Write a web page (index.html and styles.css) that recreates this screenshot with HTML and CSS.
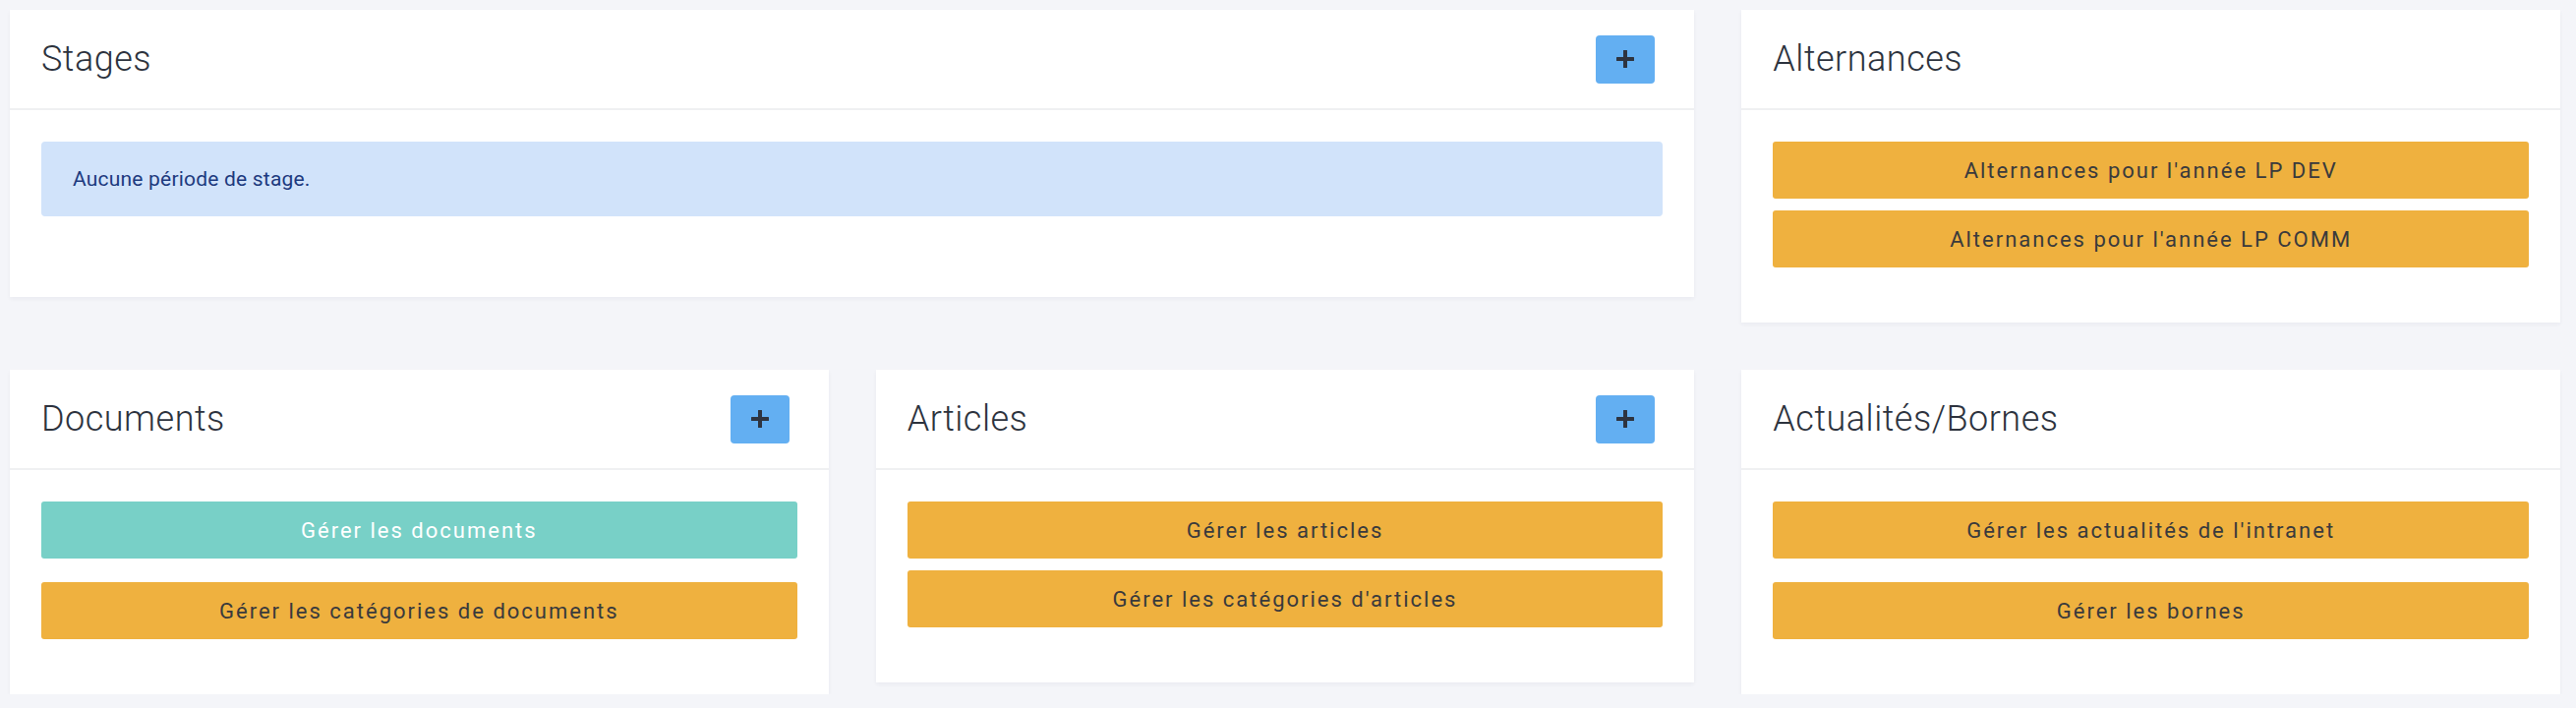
FILE: index.html
```html
<!DOCTYPE html>
<html lang="fr">
<head>
<meta charset="utf-8">
<title>Tableau de bord</title>
<link rel="stylesheet" href="styles.css">
</head>
<body>
<main class="grid">
  <section class="card card-wide">
    <header class="card-header">
      <h2 class="card-title">Stages</h2>
      <button class="btn-add" type="button" aria-label="Ajouter">
        <svg width="18" height="18" viewBox="0 0 18 18"><path d="M9 1v16M1 9h16" stroke="#2e3440" stroke-width="4" stroke-linecap="round"/></svg>
      </button>
    </header>
    <div class="card-body">
      <div class="alert">Aucune période de stage.</div>
    </div>
  </section>

  <section class="card">
    <header class="card-header">
      <h2 class="card-title">Alternances</h2>
    </header>
    <div class="card-body tight">
      <a class="btn btn-orange">Alternances pour l'année LP DEV</a>
      <a class="btn btn-orange">Alternances pour l'année LP COMM</a>
    </div>
  </section>

  <section class="card">
    <header class="card-header">
      <h2 class="card-title">Documents</h2>
      <button class="btn-add" type="button" aria-label="Ajouter">
        <svg width="18" height="18" viewBox="0 0 18 18"><path d="M9 1v16M1 9h16" stroke="#2e3440" stroke-width="4" stroke-linecap="round"/></svg>
      </button>
    </header>
    <div class="card-body loose">
      <a class="btn btn-teal">Gérer les documents</a>
      <a class="btn btn-orange">Gérer les catégories de documents</a>
    </div>
  </section>

  <section class="card">
    <header class="card-header">
      <h2 class="card-title">Articles</h2>
      <button class="btn-add" type="button" aria-label="Ajouter">
        <svg width="18" height="18" viewBox="0 0 18 18"><path d="M9 1v16M1 9h16" stroke="#2e3440" stroke-width="4" stroke-linecap="round"/></svg>
      </button>
    </header>
    <div class="card-body tight">
      <a class="btn btn-orange">Gérer les articles</a>
      <a class="btn btn-orange">Gérer les catégories d'articles</a>
    </div>
  </section>

  <section class="card">
    <header class="card-header">
      <h2 class="card-title">Actualités/Bornes</h2>
    </header>
    <div class="card-body loose">
      <a class="btn btn-orange">Gérer les actualités de l'intranet</a>
      <a class="btn btn-orange">Gérer les bornes</a>
    </div>
  </section>
</main>
</body>
</html>
```

FILE: styles.css
```css
* { box-sizing: border-box; }

html, body {
  margin: 0;
  background: #f4f5f9;
}

body {
  padding: 10px 16px 0 10px;
  font-family: Roboto, "Liberation Sans", Arial, sans-serif;
  color: #2e3440;
}

.grid {
  display: grid;
  grid-template-columns: repeat(3, 1fr);
  column-gap: 48px;
  row-gap: 48px;
  align-items: start;
}

.card {
  background: #ffffff;
  box-shadow: 0 2px 4px rgba(30, 40, 70, 0.05);
}

.card-wide {
  grid-column: span 2;
}

.card-header {
  height: 102px;
  display: flex;
  align-items: center;
  justify-content: space-between;
  padding: 0 40px 0 32px;
  border-bottom: 2px solid #eff0f2;
}

.card-title {
  margin: 0;
  font-size: 36px;
  font-weight: 300;
  color: #2d333e;
  letter-spacing: 0.5px;
}

.btn-add {
  width: 60px;
  height: 49px;
  border: 0;
  border-radius: 4px;
  background: #63aff2;
  display: flex;
  align-items: center;
  justify-content: center;
  padding: 0;
}

.card-body {
  display: flex;
  flex-direction: column;
  padding: 32px 32px 56px;
}

.card-body.tight { gap: 12px; }
.card-body.loose { gap: 24px; }

.alert {
  height: 76px;
  display: flex;
  align-items: center;
  padding: 0 32px;
  margin-bottom: 26px;
  background: #d1e3fa;
  color: #1d3a7e;
  border-radius: 4px;
  font-size: 21px;
  letter-spacing: 0.2px;
}

.btn {
  height: 58px;
  display: flex;
  align-items: center;
  justify-content: center;
  border-radius: 3px;
  font-size: 22px;
  letter-spacing: 2px;
  text-decoration: none;
}

.btn-orange {
  background: #efb13f;
  color: #3a3a3c;
}

.btn-teal {
  background: #78d0c7;
  color: #ffffff;
}
```
